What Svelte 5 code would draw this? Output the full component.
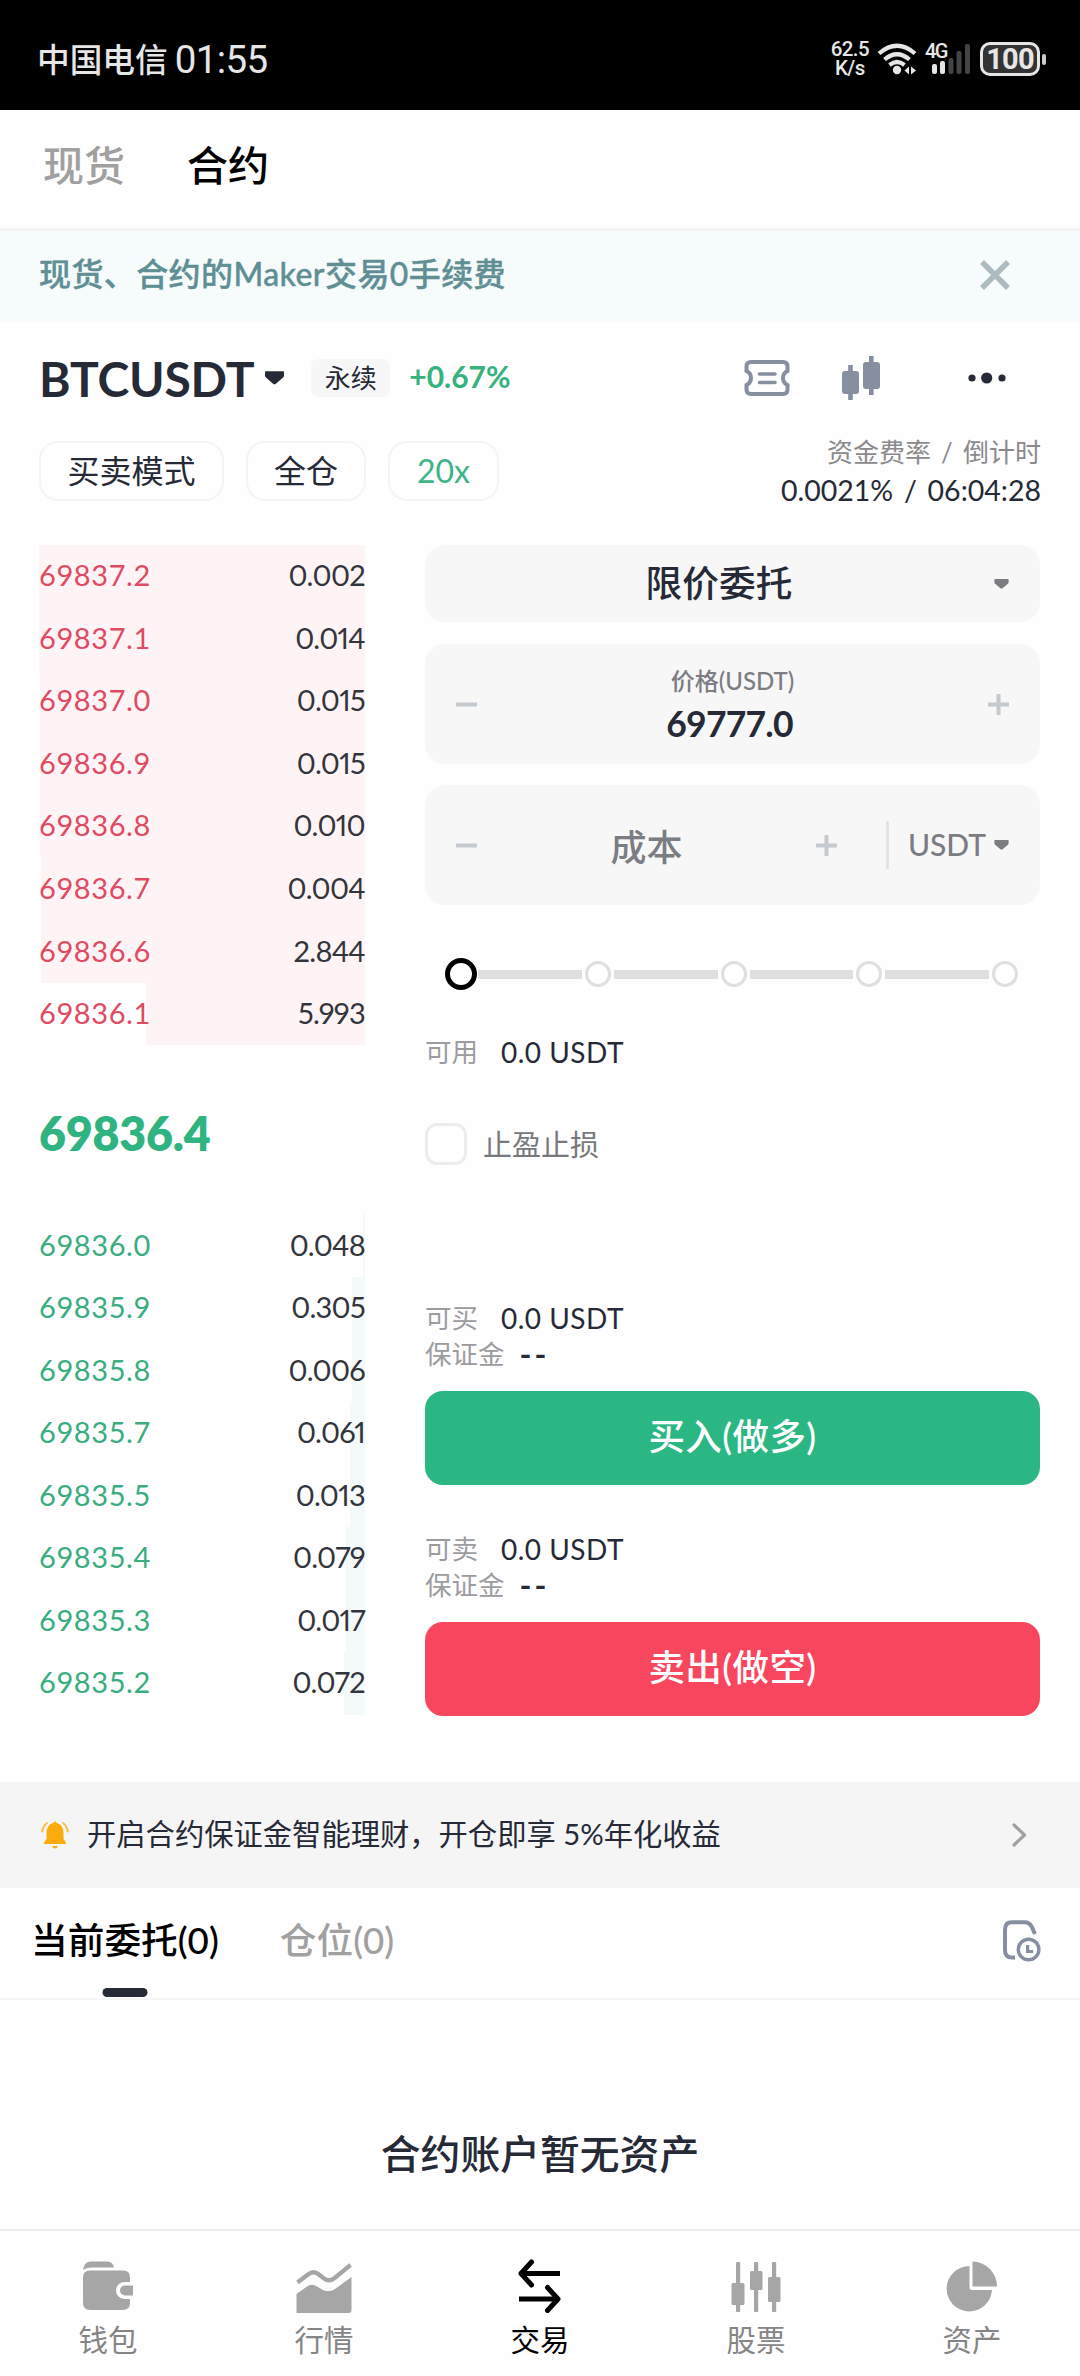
<script>

	// Order book data, depth is the bar's share of the row in percent:
	const asks = [
		{ price: '69837.2', size: '0.002', depth: 100 },
		{ price: '69837.1', size: '0.014', depth: 100 },
		{ price: '69837.0', size: '0.015', depth: 99.7 },
		{ price: '69836.9', size: '0.015', depth: 99.7 },
		{ price: '69836.8', size: '0.010', depth: 99.7 },
		{ price: '69836.7', size: '0.004', depth: 99.4 },
		{ price: '69836.6', size: '2.844', depth: 99.4 },
		{ price: '69836.1', size: '5.993', depth: 67.3 }
	];

	const bids = [
		{ price: '69836.0', size: '0.048', depth: 0.6 },
		{ price: '69835.9', size: '0.305', depth: 4 },
		{ price: '69835.8', size: '0.006', depth: 4 },
		{ price: '69835.7', size: '0.061', depth: 4.6 },
		{ price: '69835.5', size: '0.013', depth: 4.7 },
		{ price: '69835.4', size: '0.079', depth: 5.8 },
		{ price: '69835.3', size: '0.017', depth: 5.9 },
		{ price: '69835.2', size: '0.072', depth: 6.5 }
	];

	const sides = [
		{ kind: 'buy', label: '可买', action: '买入(做多)' },
		{ kind: 'sell', label: '可卖', action: '卖出(做空)' }
	];

	const nav = [
		{ id: 'wallet', label: '钱包' },
		{ id: 'market', label: '行情' },
		{ id: 'trade', label: '交易' },
		{ id: 'stock', label: '股票' },
		{ id: 'assets', label: '资产' }
	];

	let activeNav = $state('trade');
	let activeTab = $state('contract');
	let activeList = $state('orders');
	let step = $state(0);

</script>

<!-- #################################################################################################### -->

{#snippet caret(w, h)}
	<svg class="caret" width={w} height={h} viewBox="0 0 20 14"><path d="M1 0h18q1 0 1 1v3.500q0 1-1 2l-7.500 6.500q-1.500 1.200-3 0L1 6.500q-1-1-1-2V1q0-1 1-1z" /></svg>
{/snippet}

{#snippet minus()}
	<svg class="sign" width="21" height="21" viewBox="0 0 21 21"><path d="M0 10.500h21" /></svg>
{/snippet}

{#snippet plus()}
	<svg class="sign" width="21" height="21" viewBox="0 0 21 21"><path d="M0 10.500h21M10.500 0v21" /></svg>
{/snippet}

{#snippet book(rows, kind)}
	<div class="rows {kind}">
		{#each rows as row}
			<div class="row">
				<div class="depth" style="width: {row.depth}%"></div>
				<span class="price">{row.price}</span>
				<span class="size">{row.size}</span>
			</div>
		{/each}
	</div>
{/snippet}

<div class="screen">

	<!-- Status Bar -->
	<div class="status">
		<span class="carrier">中国电信</span>
		<span class="clock">01:55</span>
		<div class="speed">62.5<br>K/s</div>
		<svg class="wifi" width="42" height="34" viewBox="0 0 42 34" fill="none" stroke="#e6e6e6" stroke-width="4.200">
			<path d="M2 11.500Q20 -4 38 11.500M7.500 17.500Q20 7 32.500 17.500M12.500 23Q20 17 27.500 23" />
			<circle cx="20" cy="28" r="4.200" fill="#e6e6e6" stroke="none" />
			<path d="M32 24.500v8l-4.500-4zM34 24.500v8l5-4z" fill="#e6e6e6" stroke="none" />
		</svg>
		<div class="signal">
			<span>4G</span>
			<svg width="46" height="32" viewBox="0 0 46 32">
				<g fill="#e6e6e6"><rect x="7" y="21" width="5" height="10" rx="2" /><rect x="15" y="18" width="5" height="13" rx="2" /></g>
				<g fill="#444"><rect x="23.500" y="15" width="5" height="16" rx="2" /><rect x="31.500" y="8" width="5" height="23" rx="2" /><rect x="40" y="1" width="5" height="30" rx="2" /></g>
			</svg>
		</div>
		<div class="battery">100</div>
		<div class="nub"></div>
	</div>

	<!-- Spot / Contract Switch -->
	<div class="switch">
		<button class:active={activeTab === 'spot'} onclick={() => activeTab = 'spot'}>现货</button>
		<button class:active={activeTab === 'contract'} onclick={() => activeTab = 'contract'}>合约</button>
	</div>

	<!-- Fee Banner -->
	<div class="banner">
		<span>现货、合约的Maker交易0手续费</span>
		<svg width="30" height="30" viewBox="0 0 30 30" stroke="#abbbbe" stroke-width="5.500"><path d="M2 2l26 26M28 2L2 28" /></svg>
	</div>

	<!-- Pair Heading -->
	<div class="pair">
		<h1>BTCUSDT</h1>
		{@render caret(19, 14)}
		<span class="tag">永续</span>
		<span class="change">+0.67%</span>
		<svg class="ticket" width="46" height="38" viewBox="0 0 46 38" fill="none" stroke="#858fa0" stroke-width="4">
			<path d="M7 3h32q4.500 0 4.500 4.500v4.500c-6 3-6 11 0 14v4.500q0 4.500-4.500 4.500H7q-4.500 0-4.500-4.500V26c6-3 6-11 0-14V7.500Q2.500 3 7 3z" />
			<path d="M15.500 15h15.500M15.500 23.500h15.500" stroke-width="3.600" stroke-linecap="round" />
		</svg>
		<svg class="candles" width="38" height="44" viewBox="0 0 38 44" fill="#858fa0">
			<rect x="0" y="15" width="17" height="23" rx="3" /><rect x="6.200" y="9" width="4.600" height="35" />
			<rect x="21" y="6" width="17" height="27" rx="3" /><rect x="27" y="0" width="4.600" height="39" />
		</svg>
		<svg class="dots" width="38" height="12" viewBox="0 0 38 12" fill="#252a36">
			<circle cx="4" cy="6" r="3.600" /><circle cx="18.700" cy="6" r="5.600" /><circle cx="34" cy="6" r="3.600" />
		</svg>
	</div>

	<!-- Margin Mode & Funding -->
	<div class="modes">
		<span class="chip mode">买卖模式</span>
		<span class="chip cross">全仓</span>
		<span class="chip lever">20x</span>
		<div class="funding">
			<span class="title">资金费率 / 倒计时</span>
			<span class="value">0.0021% / 06:04:28</span>
		</div>
	</div>

	<div class="main">

		<!-- Order Book -->
		<div class="book">
			{@render book(asks, 'asks')}
			<div class="last">69836.4</div>
			{@render book(bids, 'bids')}
		</div>

		<!-- Order Form -->
		<div class="form">
			<div class="field type">
				<span>限价委托</span>
				{@render caret(15, 10)}
			</div>

			<div class="field limit">
				{@render minus()}
				<div class="input">
					<span class="name">价格(USDT)</span>
					<span class="number">69777.0</span>
				</div>
				{@render plus()}
			</div>

			<div class="field cost">
				{@render minus()}
				<span class="hint">成本</span>
				{@render plus()}
				<div class="unit">
					<span>USDT</span>
					{@render caret(15, 10)}
				</div>
			</div>

			<div class="slider">
				{#each [0, 1, 2, 3, 4] as i}
					{#if i > 0}<div class="track"></div>{/if}
					<button class="stop" class:current={step === i} aria-label="{i * 25}%" onclick={() => step = i}></button>
				{/each}
			</div>

			<div class="line available"><span>可用</span><b>0.0 USDT</b></div>

			<div class="tpsl"><i class="box"></i><span>止盈止损</span></div>

			{#each sides as side}
				<div class="side {side.kind}">
					<div class="line"><span>{side.label}</span><b>0.0 USDT</b></div>
					<div class="line margin"><span>保证金</span><b>--</b></div>
					<button class="submit">{side.action}</button>
				</div>
			{/each}
		</div>
	</div>

	<!-- Earn Notice -->
	<div class="notice">
		<svg width="28" height="28" viewBox="0 0 28 28" fill="#fcab0e">
			<path d="M14 .5q1.500 0 1.800 1.500Q22.500 4 22.500 11.500v6.500l2.500 3.500q.6 1.500-.8 1.500H3.800q-1.400 0-.8-1.500L5.500 18v-6.500Q5.500 4 12.200 2q.3-1.500 1.800-1.500z" />
			<path d="M11 25h6q-.8 2.500-3 2.500T11 25z" />
			<path d="M6 2Q2 5 1.200 10.500M22 2q4 3 4.800 8.500" fill="none" stroke="#fcab0e" stroke-width="2" stroke-linecap="round" opacity=".75" />
		</svg>
		<span>开启合约保证金智能理财，开仓即享 5%年化收益</span>
		<svg class="chevron" width="15" height="24" viewBox="0 0 15 24" fill="none" stroke="#a0a0a0" stroke-width="3.200" stroke-linecap="round" stroke-linejoin="round"><path d="M2 2l10.500 10L2 22" /></svg>
	</div>

	<!-- Orders / Positions -->
	<div class="lists">
		<button class:active={activeList === 'orders'} onclick={() => activeList = 'orders'}>当前委托(0)</button>
		<button class:active={activeList === 'positions'} onclick={() => activeList = 'positions'}>仓位(0)</button>
		<svg width="38" height="42" viewBox="0 0 38 42" fill="none" stroke="#858fa0">
			<path d="M12 37.500H9Q2 37.500 2 30.500V9.500Q2 2.200 9 2.200h13q4 0 6.500 4L32 14" stroke-width="4" />
			<circle cx="25.600" cy="29.500" r="10.300" stroke-width="3.400" />
			<path d="M24.600 25v6.500h5.500" stroke-width="3.200" />
		</svg>
	</div>

	<div class="empty">合约账户暂无资产</div>

	<!-- Bottom Navigation -->
	<div class="nav">
		{#each nav as item}
			<button class:active={activeNav === item.id} onclick={() => activeNav = item.id}>
				<svg width="56" height="54" viewBox="0 0 56 54" fill="currentColor">
					{#if item.id === 'wallet'}
						<path d="M3 11Q4 2.500 11 2.500h16Q33 2.500 34 8.500H11Q6 8.500 3 11z" />
						<path d="M10 11.500h33q7 0 7 7V23h-5.500a8.500 8.500 0 0 0 0 17H50v4q0 7-7 7H10q-7 0-7-7V18.500q0-7 7-7z" />
						<path d="M45 26.500h8v10h-8a5 5 0 0 1 0-10z" />
					{:else if item.id === 'market'}
						<path d="M1.500 23.500L12 15.500q5.500-4.500 11 0l5 4q5 3.500 10 0L54.500 6" fill="none" stroke="currentColor" stroke-width="4.200" />
						<path d="M.5 35L11 27.500q5-3.500 10 0l6 3.500q6 3 12-1L55.500 18v33q0 3-3 3H.5z" />
					{:else if item.id === 'trade'}
						<g fill="none" stroke="currentColor" stroke-width="5">
							<path d="M9 14.500h39M7 40h39" />
							<path d="M19.500 3L9 14.500 19.500 26M35.500 28.500L46 40 35.500 51.500" stroke-linejoin="round" stroke-linecap="round" />
						</g>
					{:else if item.id === 'stock'}
						<rect x="8" y="3" width="4.200" height="50" rx="1" /><rect x="3.500" y="24" width="13" height="22" rx="1.500" />
						<rect x="26" y="3" width="4.200" height="50" rx="1" /><rect x="22" y="12" width="12.500" height="19" rx="1.500" />
						<rect x="44" y="3" width="4.200" height="50" rx="1" /><rect x="40" y="18" width="12.500" height="25" rx="1.500" />
					{:else}
						<path d="M25.500 7A22.700 22.700 0 1 0 48 31H28q-2.500 0-2.500-2.500z" />
						<path d="M28.500 2.500A25 25 0 0 1 53 27.500H28.500z" />
					{/if}
				</svg>
				<span>{item.label}</span>
			</button>
		{/each}
	</div>
</div>

<!-- #################################################################################################### -->

<style>

	:global(body) {
		margin: 0;
		background-color: #fefefe;
	}

	.screen {
		display: flex;
		flex-direction: column;
		width: 1080px;
		height: 2376px;
		overflow: hidden;
		color: #252a36;
		background-color: #fefefe;
		font-family: Lato, "Noto Sans CJK SC", sans-serif;
	}

	.screen * {
		box-sizing: border-box;
	}

	button {
		padding: 0;
		border: none;
		background: none;
		color: inherit;
		font: inherit;
		cursor: pointer;
	}

	span, b, h1 {
		white-space: nowrap;
	}

	svg {
		display: block;
		flex: none;
	}

	.caret {
		fill: currentColor;
	}

	/* Status bar */

	.status {
		display: flex;
		align-items: center;
		height: 110px;
		padding: 8px 34px 0 37px;
		color: #e6e6e6;
		background-color: #000;
		font-family: Roboto, "Noto Sans CJK SC", sans-serif;
	}

	.carrier {
		margin-bottom: 4px;
		font-size: 32.700px;
		font-weight: 500;
	}

	.clock {
		margin: 0 auto 0 7px;
		font-size: 38.500px;
		letter-spacing: -.6px;
	}

	.speed {
		margin-right: 8px;
		font-size: 20.500px;
		font-weight: 500;
		line-height: 19px;
		letter-spacing: -.6px;
		text-align: center;
	}

	.signal {
		position: relative;
		margin: 0 9px 0 6px;
	}

	.signal span {
		position: absolute;
		top: -1px;
		left: 0;
		font-size: 20px;
		font-weight: 500;
		line-height: 18px;
		letter-spacing: -1.500px;
	}

	.battery {
		width: 60px;
		height: 34px;
		border: 3px solid #e6e6e6;
		border-radius: 10px;
		background-color: #333;
		font-size: 29px;
		font-weight: 700;
		line-height: 29px;
		text-align: center;
		letter-spacing: -.8px;
	}

	.nub {
		width: 4px;
		height: 11px;
		margin-left: 2px;
		border-radius: 2px;
		background-color: #ccc;
	}

	/* Header */

	.switch {
		display: flex;
		gap: 62px;
		height: 121px;
		padding: 0 43px;
		border-bottom: 3px solid #f4f4f4;
		font-size: 41px;
		font-weight: 500;
	}

	.switch button {
		height: 106px;
		color: #a0a0a0;
	}

	.switch button.active {
		color: #000;
	}

	.banner {
		display: flex;
		align-items: center;
		justify-content: space-between;
		height: 90px;
		padding: 0 70px 2px 39px;
		color: #5f8f95;
		background-color: #f6fcfc;
		font-size: 32px;
		font-weight: 500;
	}

	.banner span {
		margin-bottom: 6px;
		letter-spacing: .4px;
		-webkit-text-stroke: .4px currentColor;
	}

	.pair {
		display: flex;
		align-items: center;
		height: 114px;
		padding: 0 74px 0 39px;
	}

	h1 {
		margin: 0;
		font-size: 48px;
		font-weight: 700;
		letter-spacing: -.2px;
	}

	.pair .caret {
		margin-left: 11px;
	}

	.tag {
		margin-left: 27px;
		width: 79px;
		height: 38px;
		border-radius: 7px;
		background-color: #f7f7f8;
		font-size: 26px;
		line-height: 38px;
		text-align: center;
	}

	.change {
		margin: 0 auto 4px 19px;
		color: #35b27d;
		font-size: 30px;
		font-weight: 700;
	}

	.candles {
		margin-left: 52px;
	}

	.dots {
		margin-left: 88px;
	}

	.modes {
		display: flex;
		align-items: flex-start;
		gap: 22px;
		height: 110px;
		padding: 6px 39px 0;
	}

	.chip {
		height: 60px;
		border: 2px solid #f4f4f4;
		border-radius: 19px;
		font-size: 32px;
		line-height: 56px;
		text-align: center;
	}

	.mode {
		width: 185px;
	}

	.cross {
		width: 120px;
	}

	.lever {
		width: 111px;
		color: #3db389;
	}

	.funding {
		display: flex;
		flex-direction: column;
		align-items: flex-end;
		margin: -8px 0 0 auto;
		line-height: 38px;
		word-spacing: 3.500px;
	}

	.funding .title {
		color: #8a8a8d;
		font-size: 26px;
	}

	.funding .value {
		font-size: 28.500px;
	}

	.main {
		display: flex;
		justify-content: space-between;
		height: 1237px;
		padding: 0 40px 0 39px;
	}

	/* Order book */

	.book {
		width: 326px;
	}

	.row {
		position: relative;
		display: flex;
		align-items: center;
		justify-content: space-between;
		height: 62.550px;
		padding-bottom: 3px;
		font-size: 29px;
	}

	.depth {
		position: absolute;
		top: 0;
		right: 0;
		bottom: 0;
	}

	.row span {
		position: relative;
	}

	.price {
		letter-spacing: .6px;
	}

	.size {
		color: #33353c;
		font-variant-numeric: proportional-nums;
		letter-spacing: -.7px;
	}

	.asks .depth {
		background-color: #fff4f5;
	}

	.bids .depth {
		background-color: #f4faf9;
	}

	.asks .price {
		color: #e04a62;
	}

	.bids .price {
		color: #39ad80;
	}

	.last {
		height: 169px;
		padding-top: 2px;
		color: #2fb380;
		font-size: 46.500px;
		font-weight: 800;
		line-height: 172px;
		letter-spacing: -.2px;
	}

	/* Order form */

	.form {
		display: flex;
		flex-direction: column;
		width: 615px;
	}

	.field {
		display: flex;
		align-items: center;
		height: 120px;
		margin-bottom: 21px;
		padding: 0 31px;
		border-radius: 20px;
		color: #7b7d82;
		background-color: #f7f7f7;
	}

	.sign {
		stroke: #c4cad0;
		stroke-width: 4;
	}

	.type {
		height: 77px;
		margin-bottom: 22px;
	}

	.type span {
		flex: 1;
		padding: 0 12px 5px 0;
		color: #252a36;
		font-size: 36.700px;
		font-weight: 500;
		text-align: center;
	}

	.input {
		display: flex;
		flex: 1;
		flex-direction: column;
		align-items: center;
	}

	.name {
		font-size: 24px;
		font-weight: 500;
		line-height: 40px;
	}

	.number {
		margin-right: 6px;
		color: #252a36;
		font-size: 35.500px;
		font-weight: 700;
		line-height: 46px;
		letter-spacing: -.8px;
	}

	.hint {
		flex: 1;
		font-size: 36px;
		font-weight: 500;
		text-align: center;
	}

	.unit {
		display: flex;
		align-items: center;
		gap: 8px;
		height: 48px;
		margin-left: 49px;
		padding-left: 19px;
		border-left: 3px solid #e3e3e6;
		font-size: 30px;
		font-weight: 500;
	}

	.unit span {
		margin-bottom: 3px;
	}

	.slider {
		display: flex;
		align-items: center;
		height: 34px;
		margin: 31px 22px 0 20px;
	}

	.stop {
		flex: none;
		width: 26px;
		height: 26px;
		border: 3px solid #dfdfdf;
		border-radius: 50%;
	}

	.stop.current {
		width: 32px;
		height: 32px;
		margin-right: -2px;
		border: 5px solid #000;
	}

	.track {
		flex: 1;
		height: 9px;
		margin: 0 3px;
		background-color: #dfdfdf;
	}

	.line {
		display: flex;
		height: 36px;
		color: #9c9ca0;
		font-size: 26.500px;
		line-height: 36px;
	}

	.line b {
		margin-left: 23px;
		color: #252a36;
		font-size: 28px;
		font-weight: 400;
		letter-spacing: .5px;
	}

	.margin b {
		margin-left: 15px;
		font-size: 32px;
		font-weight: 700;
		letter-spacing: 3px;
	}

	.available {
		margin-top: 43px;
	}

	.tpsl {
		display: flex;
		align-items: center;
		gap: 16px;
		height: 42px;
		margin: 53px 0 135px;
		color: #77787c;
		font-size: 29px;
	}

	.tpsl span {
		margin-bottom: 2px;
	}

	.box {
		width: 42px;
		height: 42px;
		border: 3px solid #ececec;
		border-radius: 12px;
	}

	.side {
		height: 231px;
	}

	.submit {
		display: block;
		width: 100%;
		height: 94px;
		margin-top: 19px;
		padding-bottom: 7px;
		border-radius: 18px;
		color: #fff;
		font-size: 36.500px;
		font-weight: 500;
		letter-spacing: .4px;
	}

	.buy .submit {
		background-color: #2bb784;
	}

	.sell .submit {
		background-color: #f9465f;
	}

	/* Notice, lists & navigation */

	.notice {
		display: flex;
		align-items: center;
		height: 106px;
		padding: 0 53px 0 41px;
		background-color: #f5f5f6;
		font-size: 29.300px;
	}

	.notice span {
		margin: 0 0 6px 18px;
	}

	.chevron {
		margin-left: auto;
	}

	.lists {
		display: flex;
		gap: 61px;
		height: 112px;
		padding: 0 39px 0 31px;
		border-bottom: 2px solid #f4f4f4;
		font-size: 36.700px;
		font-weight: 500;
		letter-spacing: .5px;
	}

	.lists button {
		position: relative;
		height: 110px;
		padding-bottom: 10px;
		color: #a0a0a0;
	}

	.lists button.active {
		color: #000;
	}

	.lists button.active::after {
		content: "";
		position: absolute;
		left: 50%;
		bottom: 1px;
		width: 45px;
		height: 9px;
		border-radius: 5px;
		background-color: #252a36;
		transform: translateX(-50%);
	}

	.lists svg {
		margin: 32px 0 0 auto;
	}

	.empty {
		height: 229px;
		font-size: 39.800px;
		font-weight: 500;
		line-height: 308px;
		text-align: center;
	}

	.nav {
		display: grid;
		grid-template-columns: repeat(5, 1fr);
		height: 147px;
		border-top: 2px solid #ededed;
	}

	.nav button {
		display: flex;
		flex-direction: column;
		align-items: center;
		padding-top: 28px;
		color: #a6a6a6;
		font-size: 29.500px;
		line-height: 40px;
	}

	.nav span {
		margin-top: 7px;
		color: #858585;
	}

	.nav .active, .nav .active span {
		color: #000;
	}

</style>
